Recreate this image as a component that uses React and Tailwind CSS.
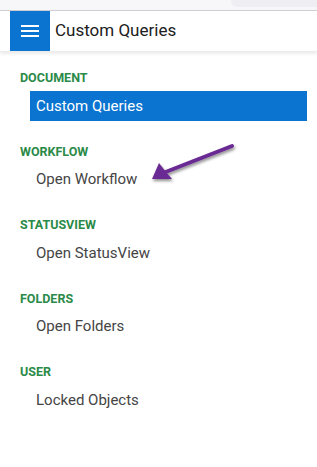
import React from 'react';

const sections = [
  { title: 'DOCUMENT', items: ['Custom Queries'], active: 'Custom Queries' },
  { title: 'WORKFLOW', items: ['Open Workflow'] },
  { title: 'STATUSVIEW', items: ['Open StatusView'] },
  { title: 'FOLDERS', items: ['Open Folders'] },
  { title: 'USER', items: ['Locked Objects'] },
];

export default function App() {
  return (
    <div className="relative w-[317px] h-[467px] bg-white overflow-hidden font-['Roboto',sans-serif]">
      {/* browser strip */}
      <div className="h-[11px] bg-[#f7f7f9] border-b border-[#cfcfd3] flex justify-end">
        <div className="w-[86px] h-[7px] bg-[#efeff3] rounded-bl-md" />
      </div>

      {/* header */}
      <div className="h-[41px] flex items-center bg-white shadow-[0_2px_3px_rgba(0,0,0,0.08)] border-b border-[#ececec]">
        <button className="ml-[10px] w-10 h-10 bg-[#0b74d0] flex flex-col items-center justify-center gap-[3px]">
          <span className="block w-[18px] h-[2px] bg-white" />
          <span className="block w-[18px] h-[2px] bg-white" />
          <span className="block w-[18px] h-[2px] bg-white" />
        </button>
        <h1 className="ml-[5px] text-[17px] text-[#202020]">Custom Queries</h1>
      </div>

      {/* nav */}
      <nav className="pt-[18px] pl-[20px] pr-[10px]">
        {sections.map((s) => (
          <div key={s.title} className="mb-[22.5px]">
            <div className="h-4 leading-4 text-[12.5px] font-bold text-[#2a8a48]">
              {s.title}
            </div>
            {s.items.map((it) => (
              <div
                key={it}
                className={`mt-[5px] ml-[10px] h-[30px] flex items-center px-[6px] text-[15px] ${
                  s.active === it ? 'bg-[#0b74d0] text-white' : 'text-[#454545]'
                }`}
              >
                {it}
              </div>
            ))}
          </div>
        ))}
      </nav>

      {/* annotation arrow */}
      <svg className="absolute left-0 top-0 pointer-events-none" width="317" height="467">
        <defs>
          <filter id="sh" x="-20%" y="-20%" width="140%" height="140%">
            <feDropShadow dx="1" dy="2" stdDeviation="1.5" floodColor="#000" floodOpacity="0.45" />
          </filter>
        </defs>
        <g filter="url(#sh)">
          <line x1="232" y1="146" x2="163" y2="173" stroke="#6b2a93" strokeWidth="4" strokeLinecap="round" />
          <polygon points="152,179 159,163 166,172 172,179" fill="#6b2a93" />
        </g>
      </svg>
    </div>
  );
}
